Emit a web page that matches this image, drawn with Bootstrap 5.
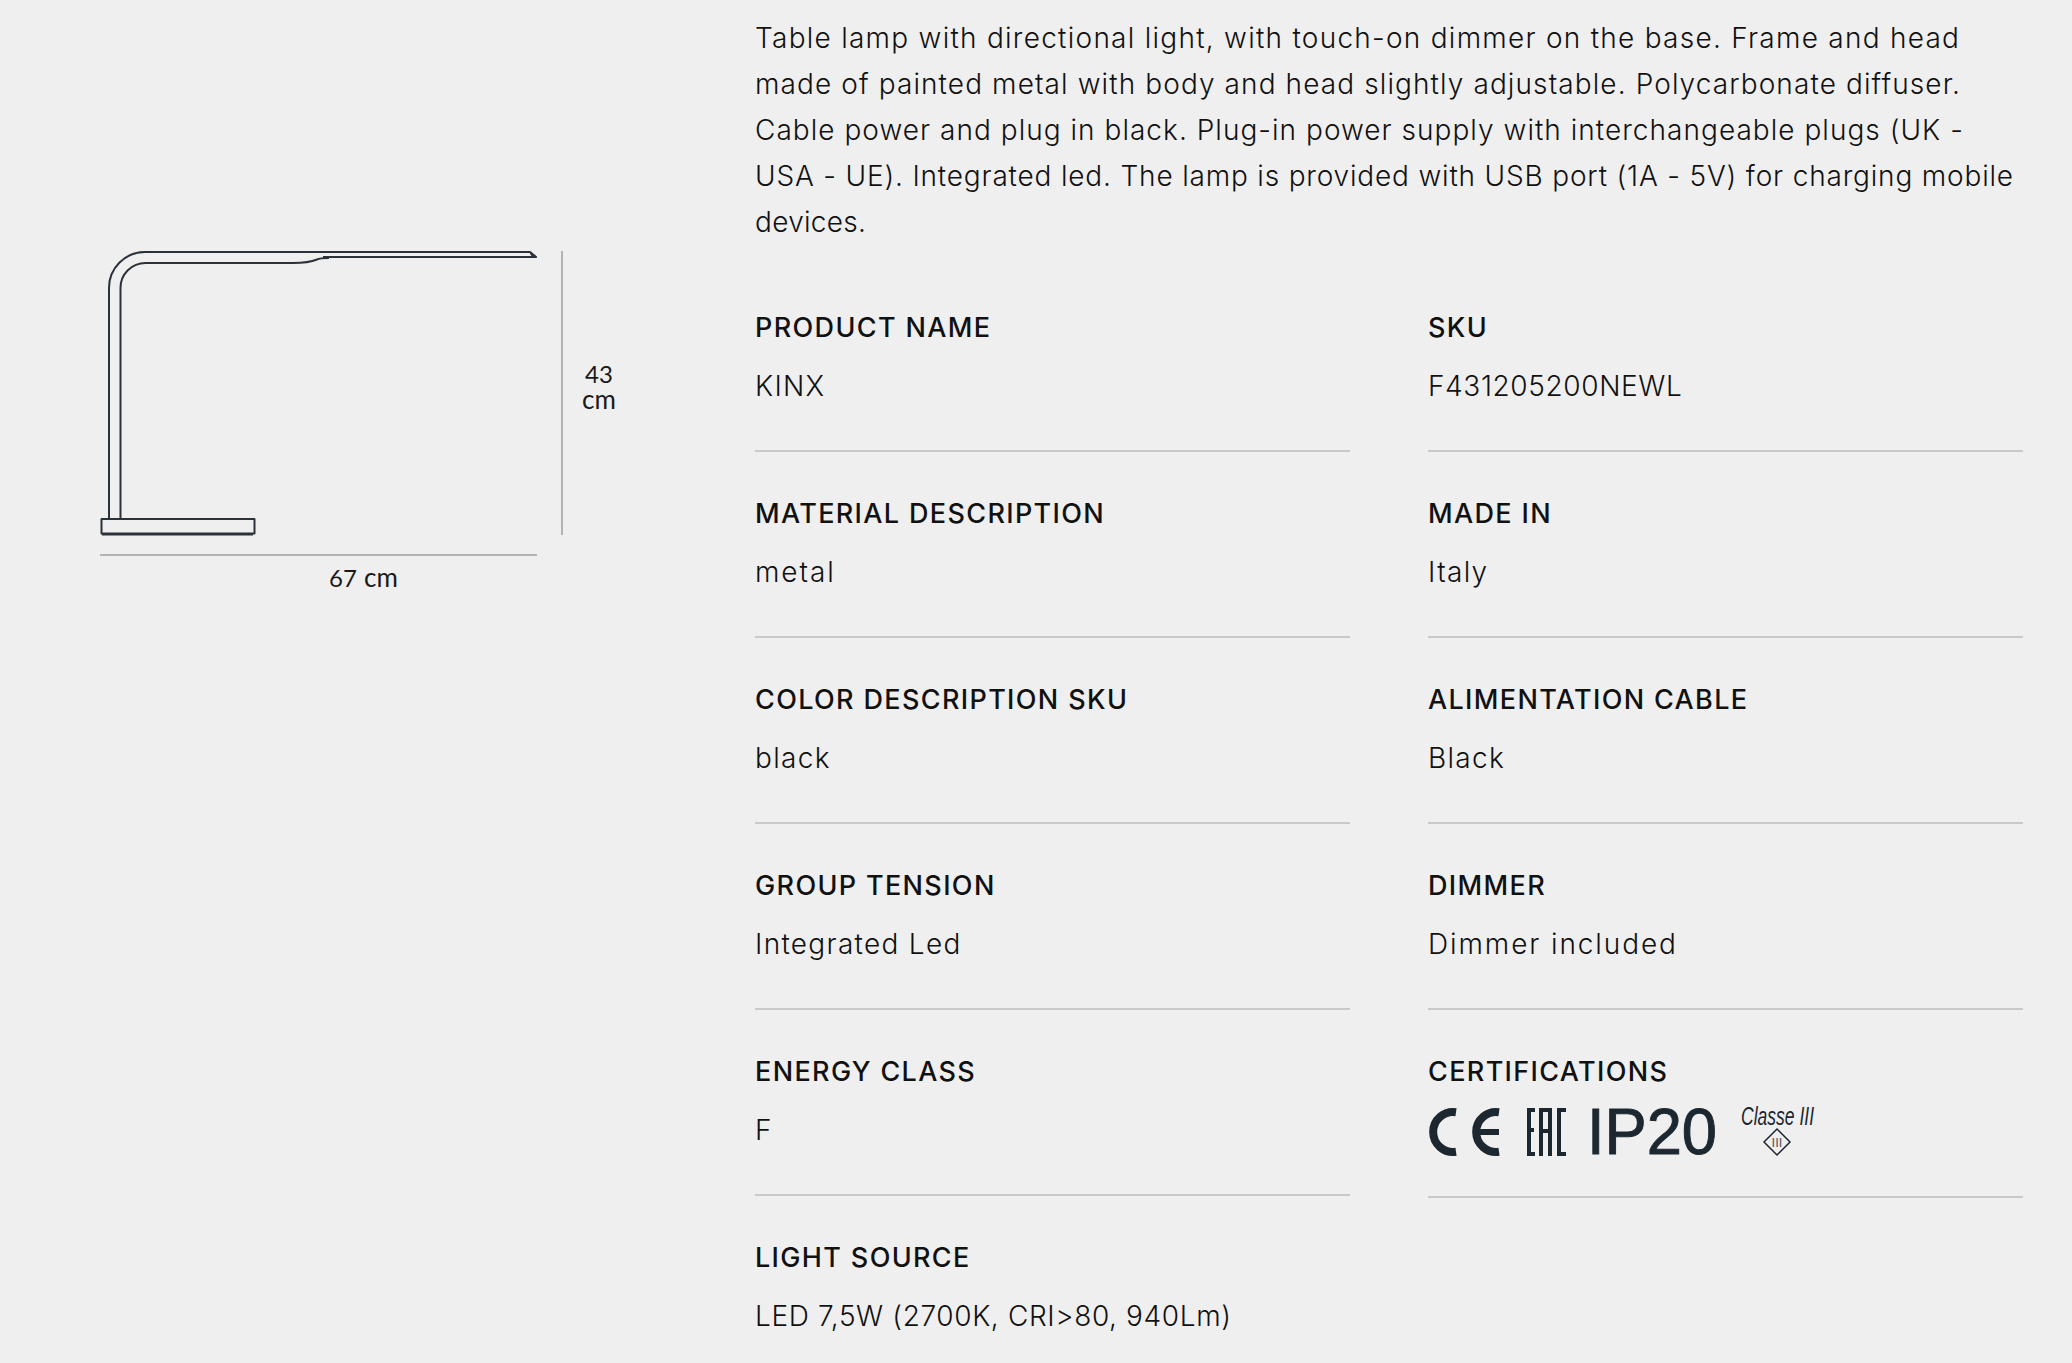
<!DOCTYPE html>
<html lang="en">
<head>
<meta charset="utf-8">
<title>KINX</title>
<link href="https://cdn.jsdelivr.net/npm/bootstrap@5.3.0/dist/css/bootstrap.min.css" rel="stylesheet">
<style>
html,body{height:100%;overflow:hidden}
body{background:#efefef;color:#111;font-family:Inter,"Liberation Sans",sans-serif;font-size:28px;font-weight:300;line-height:46px}
.sheet{height:100vh;overflow:hidden;padding:15px 49px 0 0}
.drawing-col{flex:0 0 755px;margin-top:-15px}
.drawing{display:block;width:755px;height:620px}
.drawing text{font-family:Lato,sans-serif;font-weight:400;fill:#1a1a1a;font-size:24px}
.drawing .unit{font-size:26px}
.info-col{flex:1 1 auto;min-width:0}
.intro{margin:0 0 60px;white-space:nowrap}
.intro span{display:block}
.ln1{letter-spacing:1.26px}
.ln2{letter-spacing:1.1px}
.ln3{letter-spacing:1.03px}
.ln4{letter-spacing:.82px}
.ln5{letter-spacing:.3px}
.spec-row{--bs-gutter-x:78px}
.spec{margin-bottom:39px;padding-bottom:41px;border-bottom:2px solid #c9c9c9}
.spec-name{font-size:27px;font-weight:500;margin-bottom:12px;letter-spacing:1.35px}
.spec-val{letter-spacing:1.3px}
.val-tight{letter-spacing:.62px}
.val-wide{letter-spacing:1.9px}
.cert{display:block;width:420px;height:48px;overflow:visible}
.cert text{font-family:"Liberation Sans",sans-serif;font-weight:400;fill:#1c2730}
.cert .ip{font-size:65px;stroke:#1c2730;stroke-width:1}
.cert .cl{font-style:italic;font-size:25px}
.cert .cn{font-size:13px;fill:#555}
</style>
</head>
<body>
<div class="sheet d-flex">
  <div class="drawing-col">
    <svg class="drawing" viewBox="0 0 755 620" aria-label="Lamp dimensions">
      <g fill="none" stroke="#2b323a" stroke-width="2" stroke-linejoin="round">
        <path d="M109 519V288a36 36 0 0 1 36-36H530l6 5H323"/>
        <path d="M120.500 519V288a25 25 0 0 1 25-25H293c12 0 18-1 24-3.500 3-1.500 6-1.500 12-1.500"/>
        <rect x="101.500" y="519" width="153" height="14.500"/>
      </g>
      <path d="M529 252h2l6 5h-5z" fill="#2b323a"/>
      <path d="M102 534.500H253" stroke="#2b323a" stroke-width="2"/>
      <path d="M100 555H537M562 251V535" stroke="#a0a0a0" stroke-width="1.500" fill="none"/>
      <text x="329" y="587">67</text>
      <text class="unit" x="364" y="587">cm</text>
      <text x="599" y="383" text-anchor="middle">43</text>
      <text class="unit" x="599" y="409" text-anchor="middle">cm</text>
    </svg>
  </div>
  <div class="info-col">
    <p class="intro"><span class="ln1">Table lamp with directional light, with touch-on dimmer on the base. Frame and head</span><span class="ln2">made of painted metal with body and head slightly adjustable. Polycarbonate diffuser.</span><span class="ln3">Cable power and plug in black. Plug-in power supply with interchangeable plugs (UK -</span><span class="ln4">USA - UE). Integrated led. The lamp is provided with USB port (1A - 5V) for charging mobile</span><span class="ln5">devices.</span></p>
    <div class="row spec-row">
      <div class="col-6">
        <div class="spec"><div class="spec-name">PRODUCT NAME</div><div class="spec-val">KINX</div></div>
        <div class="spec"><div class="spec-name">MATERIAL DESCRIPTION</div><div class="spec-val val-wide">metal</div></div>
        <div class="spec"><div class="spec-name">COLOR DESCRIPTION SKU</div><div class="spec-val">black</div></div>
        <div class="spec"><div class="spec-name">GROUP TENSION</div><div class="spec-val">Integrated Led</div></div>
        <div class="spec"><div class="spec-name">ENERGY CLASS</div><div class="spec-val">F</div></div>
        <div class="spec"><div class="spec-name">LIGHT SOURCE</div><div class="spec-val val-tight">LED 7,5W (2700K, CRI&gt;80, 940Lm)</div></div>
      </div>
      <div class="col-6">
        <div class="spec"><div class="spec-name">SKU</div><div class="spec-val val-tight">F431205200NEWL</div></div>
        <div class="spec"><div class="spec-name">MADE IN</div><div class="spec-val">Italy</div></div>
        <div class="spec"><div class="spec-name">ALIMENTATION CABLE</div><div class="spec-val">Black</div></div>
        <div class="spec"><div class="spec-name">DIMMER</div><div class="spec-val val-wide">Dimmer included</div></div>
        <div class="spec"><div class="spec-name">CERTIFICATIONS</div>
          <svg class="cert" viewBox="0 0 420 48" aria-label="Certifications">
            <g fill="none" stroke="#1c2730" stroke-width="8">
              <path d="M28 5.200A20 20 0 1 0 28 44.800"/>
              <path d="M71 5.200A20 20 0 1 0 71 44.800"/>
            </g>
            <path d="M52 25H71" fill="none" stroke="#1c2730" stroke-width="6"/>
            <g fill="none" stroke="#1c2730" stroke-width="4">
              <path d="M107 3H101V47H107M101 23H106"/>
              <path d="M113 49V3H122V49M113 24H122"/>
              <path d="M138 3H131V47H138"/>
            </g>
            <text class="ip" x="159" y="47" textLength="130" lengthAdjust="spacingAndGlyphs">IP20</text>
            <text class="cl" x="313" y="18" textLength="73" lengthAdjust="spacingAndGlyphs">Classe III</text>
            <path d="M349 22L362 35L349 48L336 35Z" fill="none" stroke="#1c2730" stroke-width="1.500"/>
            <text class="cn" x="349" y="40" text-anchor="middle">III</text>
          </svg>
        </div>
      </div>
    </div>
  </div>
</div>
</body>
</html>
